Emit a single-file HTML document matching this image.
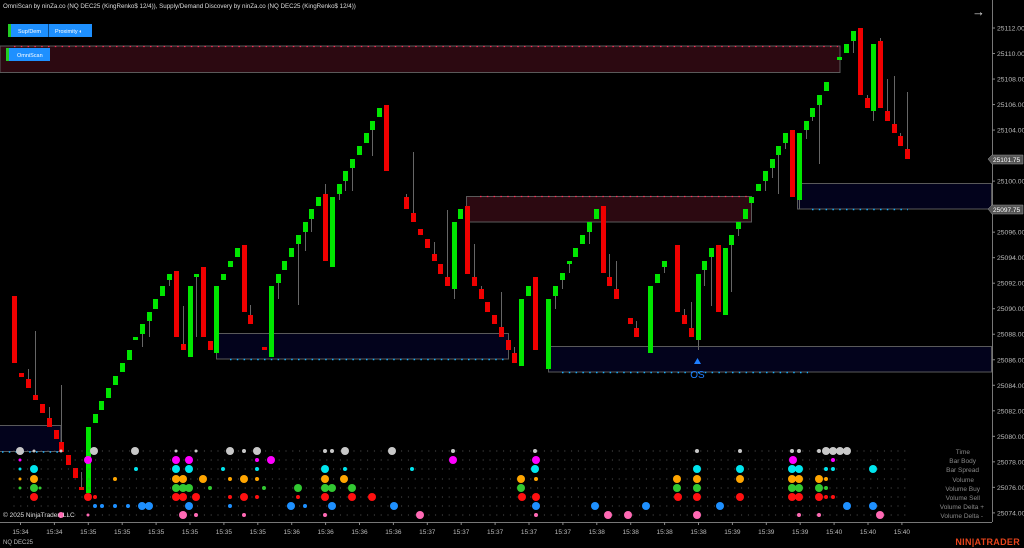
<!DOCTYPE html>
<html><head><meta charset="utf-8"><style>
html,body{margin:0;padding:0;background:#000;width:1024px;height:548px;overflow:hidden;font-family:"Liberation Sans",sans-serif}
svg{position:absolute;left:0;top:0}
</style></head><body>
<svg id="s" width="1024" height="548" xmlns="http://www.w3.org/2000/svg">
<rect width="1024" height="548" fill="#000"/>
<rect x="0" y="46" width="840" height="26.5" fill="#2c0911" stroke="#5a5a5a" stroke-width="1"/>
<rect x="466.5" y="196.5" width="285" height="25.5" fill="#2c0911" stroke="#5a5a5a" stroke-width="1"/>
<rect x="-1" y="425.5" width="62" height="26" fill="#03031c" stroke="#5a5a5a" stroke-width="1"/>
<rect x="216.5" y="333.5" width="292" height="25.5" fill="#03031c" stroke="#5a5a5a" stroke-width="1"/>
<rect x="548.5" y="346.5" width="443" height="25.5" fill="#03031c" stroke="#5a5a5a" stroke-width="1"/>
<rect x="797.5" y="183.5" width="194" height="25.5" fill="#03031c" stroke="#5a5a5a" stroke-width="1"/>
<line x1="14" y1="46.5" x2="838" y2="46.5" stroke="#ff2a55" stroke-width="1.2" stroke-dasharray="1.5,5.3"/>
<line x1="480" y1="196.5" x2="750" y2="196.5" stroke="#ff2a55" stroke-width="1.2" stroke-dasharray="1.5,5.3"/>
<line x1="2" y1="452" x2="60" y2="452" stroke="#1ab0ff" stroke-width="1.5" stroke-dasharray="1.5,5.3"/>
<line x1="230" y1="359.5" x2="508" y2="359.5" stroke="#1ab0ff" stroke-width="1.5" stroke-dasharray="1.5,5.3"/>
<line x1="562" y1="372.5" x2="808" y2="372.5" stroke="#1ab0ff" stroke-width="1.5" stroke-dasharray="1.5,5.3"/>
<line x1="812" y1="209.5" x2="908" y2="209.5" stroke="#1ab0ff" stroke-width="1.5" stroke-dasharray="1.5,5.3"/>
<g id="c"></g>
<g id="d"></g>
<polygon points="694,364 697.5,358 701,364" fill="#1e7fff"/>
<text x="697.5" y="378" font-size="10" fill="#1e7fff" text-anchor="middle">OS</text>
<line x1="992.5" y1="0" x2="992.5" y2="522" stroke="#777" stroke-width="1"/>
<line x1="0" y1="522.5" x2="992" y2="522.5" stroke="#777" stroke-width="1"/>
<g id="ax"></g>
<g>
<polygon points="988,159 992,155 1023,155 1023,164 992,164" fill="#555" stroke="#999" stroke-width="0.5"/>
<text x="993" y="162" font-size="6.5" fill="#fff">25101.75</text>
<polygon points="988,209 992,205 1023,205 1023,214 992,214" fill="#555" stroke="#999" stroke-width="0.5"/>
<text x="993" y="212" font-size="6.5" fill="#fff">25097.75</text>
</g>
<text x="3" y="8" font-size="6.2" fill="#ddd">OmniScan by ninZa.co (NQ DEC25 (KingRenko$ 12/4)), Supply/Demand Discovery by ninZa.co (NQ DEC25 (KingRenko$ 12/4))</text>
<text x="972" y="16" font-size="13" fill="#ddd">→</text>
<rect x="8" y="24" width="41" height="13" fill="#1e90ff"/>
<rect x="8" y="24" width="3" height="13" fill="#22cc22"/>
<rect x="49" y="24" width="43" height="13" fill="#1e90ff"/>
<line x1="48.5" y1="24" x2="48.5" y2="37" stroke="#0b4a88"/>
<text x="18" y="33" font-size="5.5" fill="#fff">Sup/Dem</text>
<text x="55" y="33" font-size="5.5" fill="#fff">Proximity ◐</text>
<rect x="6" y="48" width="44" height="13" fill="#1e90ff"/>
<rect x="6" y="48" width="3" height="13" fill="#22cc22"/>
<text x="17" y="57" font-size="5.5" fill="#fff">OmniScan</text>
<g font-size="6.5" fill="#888" text-anchor="end">
<text x="970" y="454">Time</text><text x="976" y="463">Bar Body</text><text x="979" y="472">Bar Spread</text>
<text x="974" y="482">Volume</text><text x="980" y="491">Volume Buy</text><text x="980" y="500">Volume Sell</text>
<text x="984" y="509">Volume Delta +</text><text x="983" y="518">Volume Delta -</text>
</g>
<text x="3" y="517" font-size="6.5" fill="#ddd">© 2025 NinjaTrader, LLC</text>
<text x="3" y="544" font-size="6" fill="#bbb">NQ DEC25</text>
<text x="1020" y="545" font-size="9" font-weight="bold" fill="#e8441c" text-anchor="end" letter-spacing="0.3">NIN|ATRADER</text>
</svg>
<script>
var NS="http://www.w3.org/2000/svg";
function el(p,t,a){var e=document.createElementNS(NS,t);for(var k in a)e.setAttribute(k,a[k]);p.appendChild(e);return e;}
var G="#00e600",R="#f00000";
var C=[
[12,296,363,R],[19,373,377,R],[26,379,388,R,369],[33,395,400,R,331],[40,404,413,R],[47,418,427,R,407],[54,430,439,R],[59,442,452,R,385],[66,455,465,R],[73,468,478,R],[79,487,490,R,472],[86,427,493,G],
[93,414,423,G],[99,401,410,G],[106,388,398,G],[113,376,385,G],[120,363,372,G],[127,350,360,G],[133,337,340,G],[140,324,334,G,0,347],[147,312,321,G,0,337],[153,299,309,G],[160,286,296,G],[167,274,280,G,0,286],
[174,271,337,R],[181,344,350,R,306],[188,286,357,G],[194,274,277,G,0,337],[201,267,337,R],[208,341,350,R],[214,286,353,G],[221,274,280,G],[228,261,267,G],[235,248,257,G],[242,245,312,R],[248,315,324,R,305],
[262,347,350,R],[269,286,357,G],[276,274,283,G,0,299],[282,261,270,G],[289,248,257,G],[296,235,244,G,0,305],[303,222,232,G,0,251],[309,209,219,G,0,232],[316,197,206,G],[323,194,261,R,184],[330,197,267,G],
[337,184,194,G,0,200],[343,171,181,G,0,191],[350,159,168,G,0,191],[357,146,155,G],[364,133,143,G],[370,121,130,G,0,156],[377,108,117,G],[384,105,171,R],
[404,197,209,R,194],[411,213,222,R,152],[418,229,235,R],[425,239,248,R],[432,254,261,R,242],[438,264,274,R],[445,277,286,R,210],[452,222,289,G,0,299],[458,209,219,G],[465,206,274,R],[472,277,286,R,244],[479,289,299,R,286],
[485,302,312,R],[492,315,324,R],[499,327,337,R,292],[506,340,350,R],[512,353,363,R,347],[519,299,366,G],[526,286,296,G],[533,277,350,R],[546,299,369,G],[553,286,296,G,0,309],[560,273,280,G,0,289],[567,261,264,G,0,273],
[573,248,257,G],[580,235,244,G],[587,222,232,G,0,244],[594,209,219,G],
[601,206,273,R],[607,277,286,R,254],[614,289,299,R,261],[628,318,324,R],[634,328,337,R,321],[648,286,353,G],[655,274,283,G],[662,261,267,G,0,273],[675,245,312,R],[682,315,324,R,309],[689,328,337,R,302],[696,274,340,G,0,350],
[702,261,270,G,0,286],[709,248,257,G,0,306],[716,245,312,R],[723,248,315,G],[729,235,245,G,0,292],[736,222,229,G,0,236],[743,209,219,G],[749,197,203,G],[756,184,191,G],[763,171,181,G,0,191],[770,159,168,G,0,178],
[776,146,155,G,0,194],[783,133,143,G,0,149],[790,130,197,R],[797,133,200,G,0,209],[804,121,130,G,0,139],[810,108,117,G,0,121],[817,95,105,G,0,164],[824,82,91,G],[837,57,60,G],[844,44,53,G],[851,31,41,G,0,53],
[858,28,95,R],[865,98,108,R,95],[871,44,111,G,0,121],[878,41,108,R,38],[885,111,121,R,79],[892,124,133,R,76],[898,136,146,R,133],[905,149,159,R,92]
];
var cg=document.getElementById("c");
C.forEach(function(b){
 var x=b[0],cx=x+2.5;
 if(b[4])el(cg,"line",{x1:cx,y1:b[4],x2:cx,y2:b[1],stroke:"#666","stroke-width":1});
 if(b[5])el(cg,"line",{x1:cx,y1:b[2],x2:cx,y2:b[5],stroke:"#666","stroke-width":1});
 el(cg,"rect",{x:x,y:b[1],width:5,height:Math.max(2,b[2]-b[1]),fill:b[3]});
});
var dg=document.getElementById("d");
var rows=[451,460,469,479,488,497,506,515];
rows.forEach(function(y){for(var x=13.5;x<910;x+=6.8)el(dg,"rect",{x:x,y:y-0.5,width:1,height:1,fill:"#555"});});
var cols=["#c8c8c8","#ff00ff","#00e5ee","#ffa500","#32c832","#ff1010","#1e90ff","#ff69b4"];
var D=[
[[20,4],[34,1.5],[61,1.5],[94,4],[135,4],[176,1.5],[196,1.5],[230,4],[244,2],[257,4],[325,2],[332,2],[345,4],[392,4],[453,2],[535,2],[697,2],[740,2],[792,2],[799,2],[819,2],[826,4],[833,4],[840,4],[847,4]],
[[20,1.5],[88,4],[176,4],[189,4],[257,2],[271,4],[453,4],[536,4],[793,4],[833,2]],
[[20,1.5],[34,4],[136,2],[176,4],[189,4],[223,2],[257,2],[325,4],[345,2],[412,2],[535,4],[697,4],[740,4],[792,4],[799,4],[826,2],[833,2],[873,4]],
[[20,1.5],[34,4],[115,2],[176,4],[183,4],[203,4],[230,2],[244,4],[257,2],[325,4],[344,4],[521,4],[536,2],[677,4],[697,4],[740,4],[792,4],[799,4],[819,4],[826,2]],
[[20,1.5],[34,4],[40,1.5],[176,4],[183,4],[189,4],[210,2],[264,2],[298,4],[325,4],[332,4],[352,4],[521,4],[677,4],[697,4],[792,4],[799,4],[819,4],[826,2]],
[[34,4],[88,4],[95,2],[176,4],[183,4],[196,4],[230,2],[244,4],[257,2],[298,2],[325,4],[352,4],[372,4],[522,4],[536,4],[678,4],[697,4],[740,4],[792,4],[799,4],[819,4],[826,2],[833,2]],
[[95,2],[102,2],[115,2],[128,2],[142,4],[149,4],[189,4],[230,2],[291,4],[305,2],[332,4],[394,4],[536,4],[595,4],[646,4],[720,4],[847,4],[873,4]],
[[61,3],[88,1.5],[183,4],[196,2],[244,2],[325,2],[420,4],[536,2],[608,4],[628,4],[697,4],[799,2],[819,2],[880,4]]
];
D.forEach(function(r,i){r.forEach(function(p){el(dg,"circle",{cx:p[0],cy:rows[i],r:p[1],fill:cols[i]});});});
var ax=document.getElementById("ax");
for(var p=25112;p>=25074;p-=2){var y=28+(25112-p)*12.76;
 if(y>150&&y<168)continue; if(y>200&&y<218)continue;
 el(ax,"line",{x1:992,y1:y,x2:995,y2:y,stroke:"#888"});
 var t=el(ax,"text",{x:997,y:y+2.5,"font-size":"6.8",fill:"#bbb"});t.textContent=p+".00";}
var T=["15:34","15:34","15:35","15:35","15:35","15:35","15:35","15:35","15:36","15:36","15:36","15:36","15:37","15:37","15:37","15:37","15:37","15:38","15:38","15:38","15:38","15:39","15:39","15:39","15:40","15:40","15:40"];
T.forEach(function(s,i){var x=20.5+i*33.9;
 el(ax,"line",{x1:x,y1:522,x2:x,y2:525,stroke:"#888"});
 var t=el(ax,"text",{x:x,y:534,"font-size":"6.5",fill:"#bbb","text-anchor":"middle"});t.textContent=s;});
</script>
</body></html>
